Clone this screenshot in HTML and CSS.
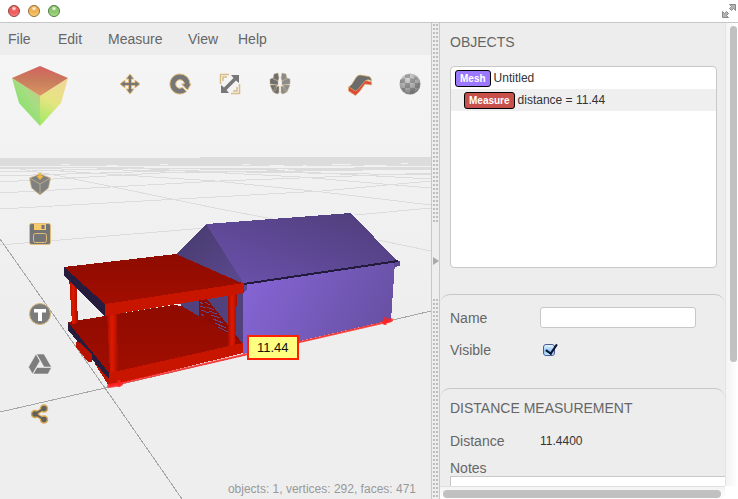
FILE: index.html
```html
<!DOCTYPE html>
<html lang="en">
<head>
  <meta charset="UTF-8">
  <meta name="viewport" content="width=device-width, initial-scale=1.0">
  <title>Mesh Viewer</title>
  <link rel="stylesheet" href="styles.css">
</head>
<body>
  <header class="titlebar">
    <div class="lights">
      <button class="light red" aria-label="Close"></button>
      <button class="light yellow" aria-label="Minimize"></button>
      <button class="light green" aria-label="Zoom"></button>
    </div>
    <button class="fullscreen" aria-label="Full screen">
      <svg width="14" height="14" viewBox="0 0 14 14" fill="#b4b4b4" stroke="#8a8a8a" stroke-width="1">
        <path d="M7.500 .5H13.500V6.500L11.500 4.500L9.500 6.500L7.500 4.500L9.500 2.500Z"/>
        <path d="M6.500 13.500H.5V7.500L2.500 9.500L4.500 7.500L6.500 9.500L4.500 11.500Z"/>
      </svg>
    </button>
  </header>

  <main class="workspace">
    <section class="editor">
      <nav class="menubar">
        <button>File</button>
        <button>Edit</button>
        <button>Measure</button>
        <button>View</button>
        <button>Help</button>
      </nav>

      <div class="viewport">
        <svg class="scene" viewBox="0 55 431 444" preserveAspectRatio="xMinYMin slice">
          <defs>
            <linearGradient id="wall" x1="0" y1="0" x2="1" y2="0.3">
              <stop offset="0" stop-color="#8866d8"/><stop offset="1" stop-color="#6952a6"/>
            </linearGradient>
            <linearGradient id="roof" x1="0" y1="1" x2="1" y2="0">
              <stop offset="0" stop-color="#6c52ae"/><stop offset="1" stop-color="#4d3d78"/>
            </linearGradient>
            <linearGradient id="gable" x1="0" y1="0" x2="1" y2="1">
              <stop offset="0" stop-color="#46396c"/><stop offset="1" stop-color="#5c4a90"/>
            </linearGradient>
            <linearGradient id="post" x1="0" y1="0" x2="1" y2="0">
              <stop offset="0" stop-color="#a80e00"/><stop offset="0.45" stop-color="#e01a00"/><stop offset="1" stop-color="#a50e00"/>
            </linearGradient>
            <linearGradient id="deck" x1="0" y1="0" x2="0" y2="1">
              <stop offset="0" stop-color="#8e0b00"/><stop offset="1" stop-color="#a20e00"/>
            </linearGradient>
          </defs>

          <!-- horizon and ground grid -->
          <path fill="#dcdcdc" shape-rendering="crispEdges" d="M0 158H200V157H431V166H0Z"/>
          <g fill="none" stroke="#dcdcdc" shape-rendering="crispEdges">
            <path d="M0 209L215 197L322 191L431 181"/>
            <path d="M0 193L220 181L431 173"/>
            <path d="M0 245L205 228M355 215L431 208"/>
            <path d="M20 169L60 176L220 209L273 219M378 240L431 251"/>
            <path d="M60 171L215 181L322 192L431 205"/>
            <path d="M150 169L300 177L431 188"/>
            <path d="M0 182L160 173L431 169"/>
            <path d="M0 176L200 170L431 167"/>
            <path d="M0 172L130 168L431 168"/>
            <path d="M0 167L431 170"/>
            <path d="M0 168L431 175"/>
            <path d="M230 168L431 179"/>
          </g>
          <path stroke="#f2f2f2" fill="none" shape-rendering="crispEdges" d="M61 164.500H70M107 165.500H118M160 164.500H168M242 164.500H250M270 165.500H284M303 165.500H306M332 164.500H351M364 165.500H386M401 163.500H408"/>
          <g fill="none" stroke="#a6a6a6" shape-rendering="crispEdges">
            <path d="M0 239L105 388L182 499"/>
            <path d="M0 412L105 388L431 311"/>
          </g>

          <!-- house -->
          <g shape-rendering="crispEdges">
            <path fill="#51427e" d="M180 298L244 285V353L206 332L181 306Z"/>
            <path fill="url(#wall)" d="M243 284L395 262L391 320L243 354Z"/>
            <path fill="#5a4790" d="M244 284L247 284V290L244 292ZM394 262L400 261V266L394 267Z"/>
            <path fill="url(#gable)" d="M206 224L176 254L244 284Z"/>
            <path fill="url(#roof)" d="M206 224L351 213L397 261L244 284Z"/>
            <path stroke="#231b3b" stroke-width="2" d="M244 284L398 261"/>
            <path fill="#8c0b00" d="M199 300L207 299L243 344L225 336L199 317Z"/>
            <path fill="none" stroke="#5c4a90" stroke-width="1" d="M200 302L203 304M200 306L206 308M201 310L209 313M205 302L210 305M207 307L214 310M209 311L217 314M211 315L220 318M213 319L223 323M215 323L226 328M218 327L228 332M221 331L228 336M201 314L204 316"/>
          </g>

          <!-- porch -->
          <g shape-rendering="crispEdges">
            <path fill="url(#deck)" d="M68 322L173 305L182 306L243 343L109 374Z"/>
            <path fill="#c81500" d="M109 373L243 343V353L109 386Z"/>
            <path fill="#251c3e" d="M68 322L109 373V380L68 330Z"/>
            <path fill="#b81200" d="M76 342L81 343L92 355V362H88L76 347ZM93 361L109 379V386Z"/>
            <path fill="url(#post)" d="M69 276H76L78 323L72 324Z"/>
            <path fill="url(#post)" d="M107 313H117L118 371L110 373Z"/>
            <path fill="url(#post)" d="M228 293H237L235 345L228 346Z"/>
            <path fill="url(#deck)" d="M64 267L176 254L244 284L105 305Z"/>
            <path fill="#c81500" d="M105 304L244 283V293L105 316Z"/>
            <path fill="#251c3e" d="M64 267L105 304V316L64 276Z"/>
          </g>

          <!-- measured edge -->
          <g stroke="#f22" stroke-opacity="0.8" fill="none">
            <path stroke-width="2" d="M109 386L391 321"/>
            <path stroke-width="4" stroke-linecap="round" d="M109 386L121 384M384 322L391 320"/>
            <path stroke-width="3" d="M385 317V325M119 380V387"/>
          </g>
        </svg>

        <svg class="viewcube" width="56" height="60" viewBox="0 0 56 60">
          <defs>
            <linearGradient id="cubeTop" x1="0.5" y1="0" x2="0.4" y2="1">
              <stop offset="0" stop-color="#d4605f"/><stop offset="0.5" stop-color="#c87e5c"/><stop offset="1" stop-color="#dc9662"/>
            </linearGradient>
            <linearGradient id="cubeLeft" x1="1" y1="0" x2="0.3" y2="0.8">
              <stop offset="0" stop-color="#d9c08a"/><stop offset="0.5" stop-color="#a7dd83"/><stop offset="1" stop-color="#83e267"/>
            </linearGradient>
            <linearGradient id="cubeRight" x1="0.6" y1="0" x2="0.3" y2="1">
              <stop offset="0" stop-color="#efd895"/><stop offset="0.5" stop-color="#e5e580"/><stop offset="1" stop-color="#a4e967"/>
            </linearGradient>
          </defs>
          <path fill="url(#cubeLeft)" d="M0 12L28 30V60L7 37Z"/>
          <path fill="url(#cubeRight)" d="M56 12L28 30V60L49 37Z"/>
          <path fill="url(#cubeTop)" d="M28 0L56 12L28 30L0 12Z"/>
        </svg>

        <div class="toolbar">
          <button aria-label="Move">
            <svg viewBox="0 0 24 24"><path class="glyph" d="M12 2L16 7H13.500V10.500H17V8L22 12L17 16V13.500H13.500V17H16L12 22L8 17H10.500V13.500H7V16L2 12L7 8V10.500H10.500V7H8Z"/></svg>
          </button>
          <button aria-label="Rotate">
            <svg viewBox="0 0 24 24"><path class="glyph" d="M12 2A10 10 0 1 0 18.500 19.500L14.500 15.500A4.300 4.300 0 1 1 16.300 12H13.500L19.500 18L23 12H22A10 10 0 0 0 12 2Z"/></svg>
          </button>
          <button aria-label="Scale">
            <svg viewBox="0 0 24 24"><path d="M2.500 12V2.500H11M21.500 12V21.500H13M5 9V5H9M19 15V19H15" fill="none" stroke="#d8bd84" stroke-width="1.500"/><path fill="#777" d="M21 3V11L18 8.500L8.500 18L11 21H3V13L6 15.500L15.500 6L13 3Z"/></svg>
          </button>
          <button aria-label="Mirror">
            <svg viewBox="0 0 24 24" stroke="#cbb58c" stroke-width="0.500">
              <path fill="#6f6f6f" d="M6 2L10 1L11 6L10 9L5 7ZM2 7L5 6L10 9V13L2 12ZM2 13L9 13L8 18L5 20ZM7 15L11 14V21L9 22L5 20Z"/>
              <path fill="#8b8b8b" d="M18 2L14 1L13 6L14 9L19 7ZM22 7L19 6L14 9V13L22 12ZM22 13L15 13L16 18L19 20ZM17 15L13 14V21L15 22L19 20Z"/>
            </svg>
          </button>
          <button class="apart" aria-label="Shell">
            <svg viewBox="0 0 24 24">
              <path fill="#e0483c" stroke="#d9ae62" stroke-width="0.700" d="M0.500 15V19L7.500 23.500L12 19L17 12L23.500 13V10L16 8Z"/>
              <path fill="#6c6c6c" stroke="#d9ae62" stroke-width="0.700" d="M1 15Q4 13 6.500 8T12 3L21 4.500Q23.500 5.500 23.500 9Q20 6.500 17 9L12 15Q10 18.500 7.500 19Z"/>
            </svg>
          </button>
          <button aria-label="Material">
            <svg viewBox="0 0 24 24">
              <defs>
                <radialGradient id="ball" cx="0.4" cy="0.2" r="0.9">
                  <stop offset="0" stop-color="#d8d8d8"/><stop offset="0.6" stop-color="#a0a0a0"/><stop offset="1" stop-color="#6c6c6c"/>
                </radialGradient>
              </defs>
              <circle cx="12" cy="12" r="10.500" fill="url(#ball)"/>
              <path fill="#555" fill-opacity="0.4" d="M7 3L12 2V6H7ZM16 4L20 7L17 8ZM2 8L7 6V11H2ZM12 6L17 7V11H12ZM7 11H12V16H7ZM17 11H22L21 16H17ZM3 16H7V20ZM12 16H17V20L12 22Z"/>
            </svg>
          </button>
        </div>

        <div class="sidebar">
          <button aria-label="Import">
            <svg viewBox="0 0 24 24">
              <path fill="#808080" stroke="#d8bd84" stroke-width="0.700" stroke-linejoin="round" d="M12 2L22.500 6L20.500 16L12 23L3.500 16L1.500 6Z"/>
              <path fill="none" stroke="#d8bd84" stroke-width="0.700" d="M1.500 6L12 12L22.500 6M12 12V23"/>
              <path fill="#f0b840" d="M10.500 1H13.500V4H15.500L12 8L8.500 4H10.500Z"/>
            </svg>
          </button>
          <button aria-label="Save">
            <svg viewBox="0 0 24 24">
              <rect x="1.500" y="1.500" width="21" height="21" rx="2" fill="#757575" stroke="#e2bd79"/>
              <path fill="#f8cb6a" d="M6 2H18V8H6Z"/><path fill="#757575" d="M13.500 3H16.500V7H13.500Z"/>
              <rect x="5.500" y="11.500" width="13" height="9" rx="2" fill="none" stroke="#e2bd79"/>
            </svg>
          </button>
          <button class="below" aria-label="Thingiverse">
            <svg viewBox="0 0 24 24"><circle cx="12" cy="12" r="10.500" fill="#7c7c7c" stroke="#d4b67a"/><path fill="#fff" d="M6 7H18V10.500H14V19H10V10.500H6Z"/></svg>
          </button>
          <button aria-label="Drive">
            <svg viewBox="0 0 24 24"><path fill="#7d7d7d" stroke="#eee" stroke-width="0.600" d="M8.500 2H16L23.500 15H16ZM8 2L12 9L4.500 22L.5 15ZM9 15.500H23.500L20 22H5Z"/></svg>
          </button>
          <button aria-label="Share">
            <svg viewBox="0 0 24 24">
              <path fill="none" stroke="#e2b661" stroke-width="4" d="M16 6.500L7 12L16 17.500"/>
              <g fill="#606060" stroke="#d8aa54" stroke-width="1.500"><circle cx="16" cy="6.500" r="3.500"/><circle cx="7" cy="12" r="3.500"/><circle cx="16" cy="17.500" r="3.500"/></g>
              <path fill="none" stroke="#606060" stroke-width="2" d="M16 6.500L7 12L16 17.500"/>
            </svg>
          </button>
        </div>

        <div class="measure-tag">11.44</div>
        <div class="status">objects: 1, vertices: 292, faces: 471</div>
      </div>
    </section>

    <div class="splitter">
      <div class="grip"></div>
      <button class="collapse" aria-label="Collapse panel"></button>
      <div class="grip"></div>
    </div>

    <aside class="panel">
      <div class="panel-body">
        <section class="objects">
          <h2>OBJECTS</h2>
          <ul class="tree">
            <li><span class="badge mesh">Mesh</span>Untitled</li>
            <li class="child selected"><span class="badge measure">Measure</span>distance = 11.44</li>
          </ul>
        </section>

        <section class="group">
          <div class="field">
            <label for="name">Name</label>
            <input type="text" id="name">
          </div>
          <div class="field">
            <label for="visible">Visible</label>
            <input type="checkbox" id="visible" checked>
          </div>
        </section>

        <section class="group details">
          <h2>DISTANCE MEASUREMENT</h2>
          <div class="field">
            <span>Distance</span>
            <span class="value">11.4400</span>
          </div>
          <label class="notes-label" for="notes">Notes</label>
          <textarea class="notes" id="notes"></textarea>
        </section>
      </div>
      <div class="scroll-y"><div class="thumb"></div></div>
      <div class="scroll-x"><div class="thumb"></div></div>
    </aside>
  </main>
</body>
</html>
```

FILE: styles.css
```css
* {
  box-sizing: border-box;
}

body {
  margin: 0;
  height: 100vh;
  display: flex;
  flex-direction: column;
  overflow: hidden;
  background: #fff;
  color: #666;
  font-family: "Liberation Sans", Arial, sans-serif;
  font-size: 14px;
}

button {
  border: none;
  padding: 0;
  background: none;
  color: inherit;
  font: inherit;
}

h2 {
  margin: 0;
  font-size: 14px;
  font-weight: normal;
  line-height: 20px;
}

/* title bar */
.titlebar {
  height: 23px;
  flex: none;
  display: flex;
  align-items: center;
  justify-content: space-between;
  padding: 0 2px 0 8px;
  border-bottom: 1px solid #c6c6c6;
}

.lights {
  display: flex;
  gap: 8px;
}

.light {
  width: 12px;
  height: 12px;
  border: 1px solid;
  border-radius: 50%;
}

.red {
  background: radial-gradient(circle at 50% 25%, #fff 0, #f05a58 30%, #f0605e 60%, #ffa9a5 100%);
  border-color: #90403c;
}

.yellow {
  background: radial-gradient(circle at 50% 25%, #fff 0, #f0ac4c 30%, #f3bd5e 60%, #ffe79a 100%);
  border-color: #94682f;
}

.green {
  background: radial-gradient(circle at 50% 25%, #fff 0, #85c368 30%, #94ce75 60%, #d0f5a9 100%);
  border-color: #4b7739;
}

.fullscreen svg {
  display: block;
}

.workspace {
  flex: 1;
  min-height: 0;
  display: flex;
}

/* left side */
.editor {
  flex: 1;
  min-width: 0;
  display: flex;
  flex-direction: column;
}

.menubar {
  height: 32px;
  flex: none;
  display: grid;
  grid-template-columns: 50px 50px 80px 50px 50px;
  padding-left: 8px;
  background: #ededed;
}

.menubar button {
  text-align: left;
}

.viewport {
  flex: 1;
  min-height: 0;
  position: relative;
  overflow: hidden;
  background: linear-gradient(#f5f5f5, #f1f1f1 30%, #eee 60%);
}

.scene {
  display: block;
  width: 100%;
  height: 100%;
}

.viewcube {
  position: absolute;
  left: 12px;
  top: 11px;
}

.toolbar,
.sidebar {
  position: absolute;
  display: flex;
}

.toolbar {
  left: 105px;
  top: 4px;
}

.sidebar {
  left: 15px;
  top: 104px;
  flex-direction: column;
}

.toolbar button,
.sidebar button {
  width: 50px;
  height: 50px;
  display: flex;
  align-items: center;
  justify-content: center;
}

.toolbar svg,
.sidebar svg {
  width: 24px;
  height: 24px;
}

.toolbar .apart {
  margin-left: 30px;
}

.sidebar .below {
  margin-top: 30px;
}

.glyph {
  fill: #777;
  stroke: #e2bd79;
  stroke-width: 1;
}

.measure-tag {
  position: absolute;
  left: 247px;
  top: 280px;
  padding: 0 8px;
  border: 2px solid #ff2200;
  background: #ffff80;
  color: #111;
  font-size: 13px;
  line-height: 21px;
}

.status {
  position: absolute;
  right: 15px;
  bottom: 2px;
  color: #999;
  font-size: 12px;
  line-height: 16px;
}

/* splitter */
.splitter {
  width: 9px;
  flex: none;
  display: flex;
  flex-direction: column;
  border: 1px solid #c8c8c8;
  border-width: 0 1px;
  background: #eee;
}

.grip {
  flex: 1;
  margin: 1px 1px 0;
  background-image: linear-gradient(#eee 2px, transparent 2px), linear-gradient(90deg, #bdbdbd 2px, transparent 2px);
  background-size: 3px 4px;
  background-position: 0 2px, 0 0;
}

.collapse {
  height: 74px;
  display: flex;
  align-items: center;
  justify-content: center;
}

.collapse::before {
  content: "";
  border-left: 6px solid #a9a9a9;
  border-top: 4px solid transparent;
  border-bottom: 4px solid transparent;
}

/* right side */
.panel {
  width: 298px;
  flex: none;
  display: grid;
  grid-template-columns: 1fr 13px;
  grid-template-rows: 1fr 13px;
  background: #fff;
}

.panel-body {
  min-width: 0;
  min-height: 0;
  overflow: hidden;
  display: flex;
  flex-direction: column;
  background: #ededed;
}

.objects {
  flex: none;
  padding: 9px 8px 26px 10px;
}

.tree {
  height: 202px;
  margin: 14px 0 0;
  padding: 0;
  overflow: hidden;
  list-style: none;
  border: 1px solid #c8c8c8;
  border-radius: 4px;
  background: #fff;
  color: #333;
  font-size: 12px;
}

.tree li {
  height: 22px;
  display: flex;
  align-items: center;
  gap: 3px;
  padding-left: 4px;
}

.tree .child {
  padding-left: 13px;
}

.tree .selected {
  background: #efefef;
}

.badge {
  padding: 0 4px;
  border: 1px solid #000;
  border-radius: 3px;
  color: #fff;
  font-size: 10px;
  font-weight: bold;
  line-height: 15px;
}

.mesh {
  background: #9c78ff;
}

.measure {
  background: #c8504b;
}

.group {
  flex: none;
  height: 94px;
  padding: 12px 10px 0;
  border-top: 1px solid #c8c8c8;
  border-radius: 10px;
}

.field {
  display: grid;
  grid-template-columns: 90px 156px;
  align-items: center;
  height: 21px;
  margin-bottom: 11px;
}

.field input[type="text"] {
  height: 21px;
  min-width: 0;
  padding: 0 4px;
  border: 1px solid #c8c8c8;
  border-radius: 3px;
  background: #fff;
}

.field input[type="checkbox"] {
  appearance: none;
  position: relative;
  width: 12px;
  height: 12px;
  margin: 0 3px;
  border: 1px solid #4a5c96;
  border-radius: 3px;
  background: linear-gradient(#e8f3fd, #8fc3f2 60%, #c0ecff);
}

.field input[type="checkbox"]:checked::after {
  content: "";
  position: absolute;
  left: 4px;
  top: -3px;
  width: 5px;
  height: 10px;
  border: solid #0c1433;
  border-width: 0 2px 2px 0;
  transform: rotate(34deg);
}

.value {
  color: #333;
  font-size: 12px;
}

.details {
  flex: 1 0 auto;
  padding: 9px 0 0 10px;
  height: auto;
}

.details .field {
  margin: 12px 0 9px;
}

.notes-label {
  display: block;
  line-height: 16px;
}

.notes {
  display: block;
  width: 300px;
  height: 60px;
  resize: none;
  border: 1px solid #c8c8c8;
  background: #fff;
}

.scroll-y {
  padding: 3px 1px 0 4px;
  border-left: 1px solid #e4e4e4;
  background: linear-gradient(90deg, #f3f3f3, #fff);
}

.scroll-x {
  padding: 3px 4px 1px 3px;
  border-top: 1px solid #e0e0e0;
  background: linear-gradient(#f3f3f3, #fff);
}

.thumb {
  border-radius: 4px;
  background: #c1c1c1;
}

.scroll-y .thumb {
  height: 73%;
}

.scroll-x .thumb {
  height: 8px;
}
```
